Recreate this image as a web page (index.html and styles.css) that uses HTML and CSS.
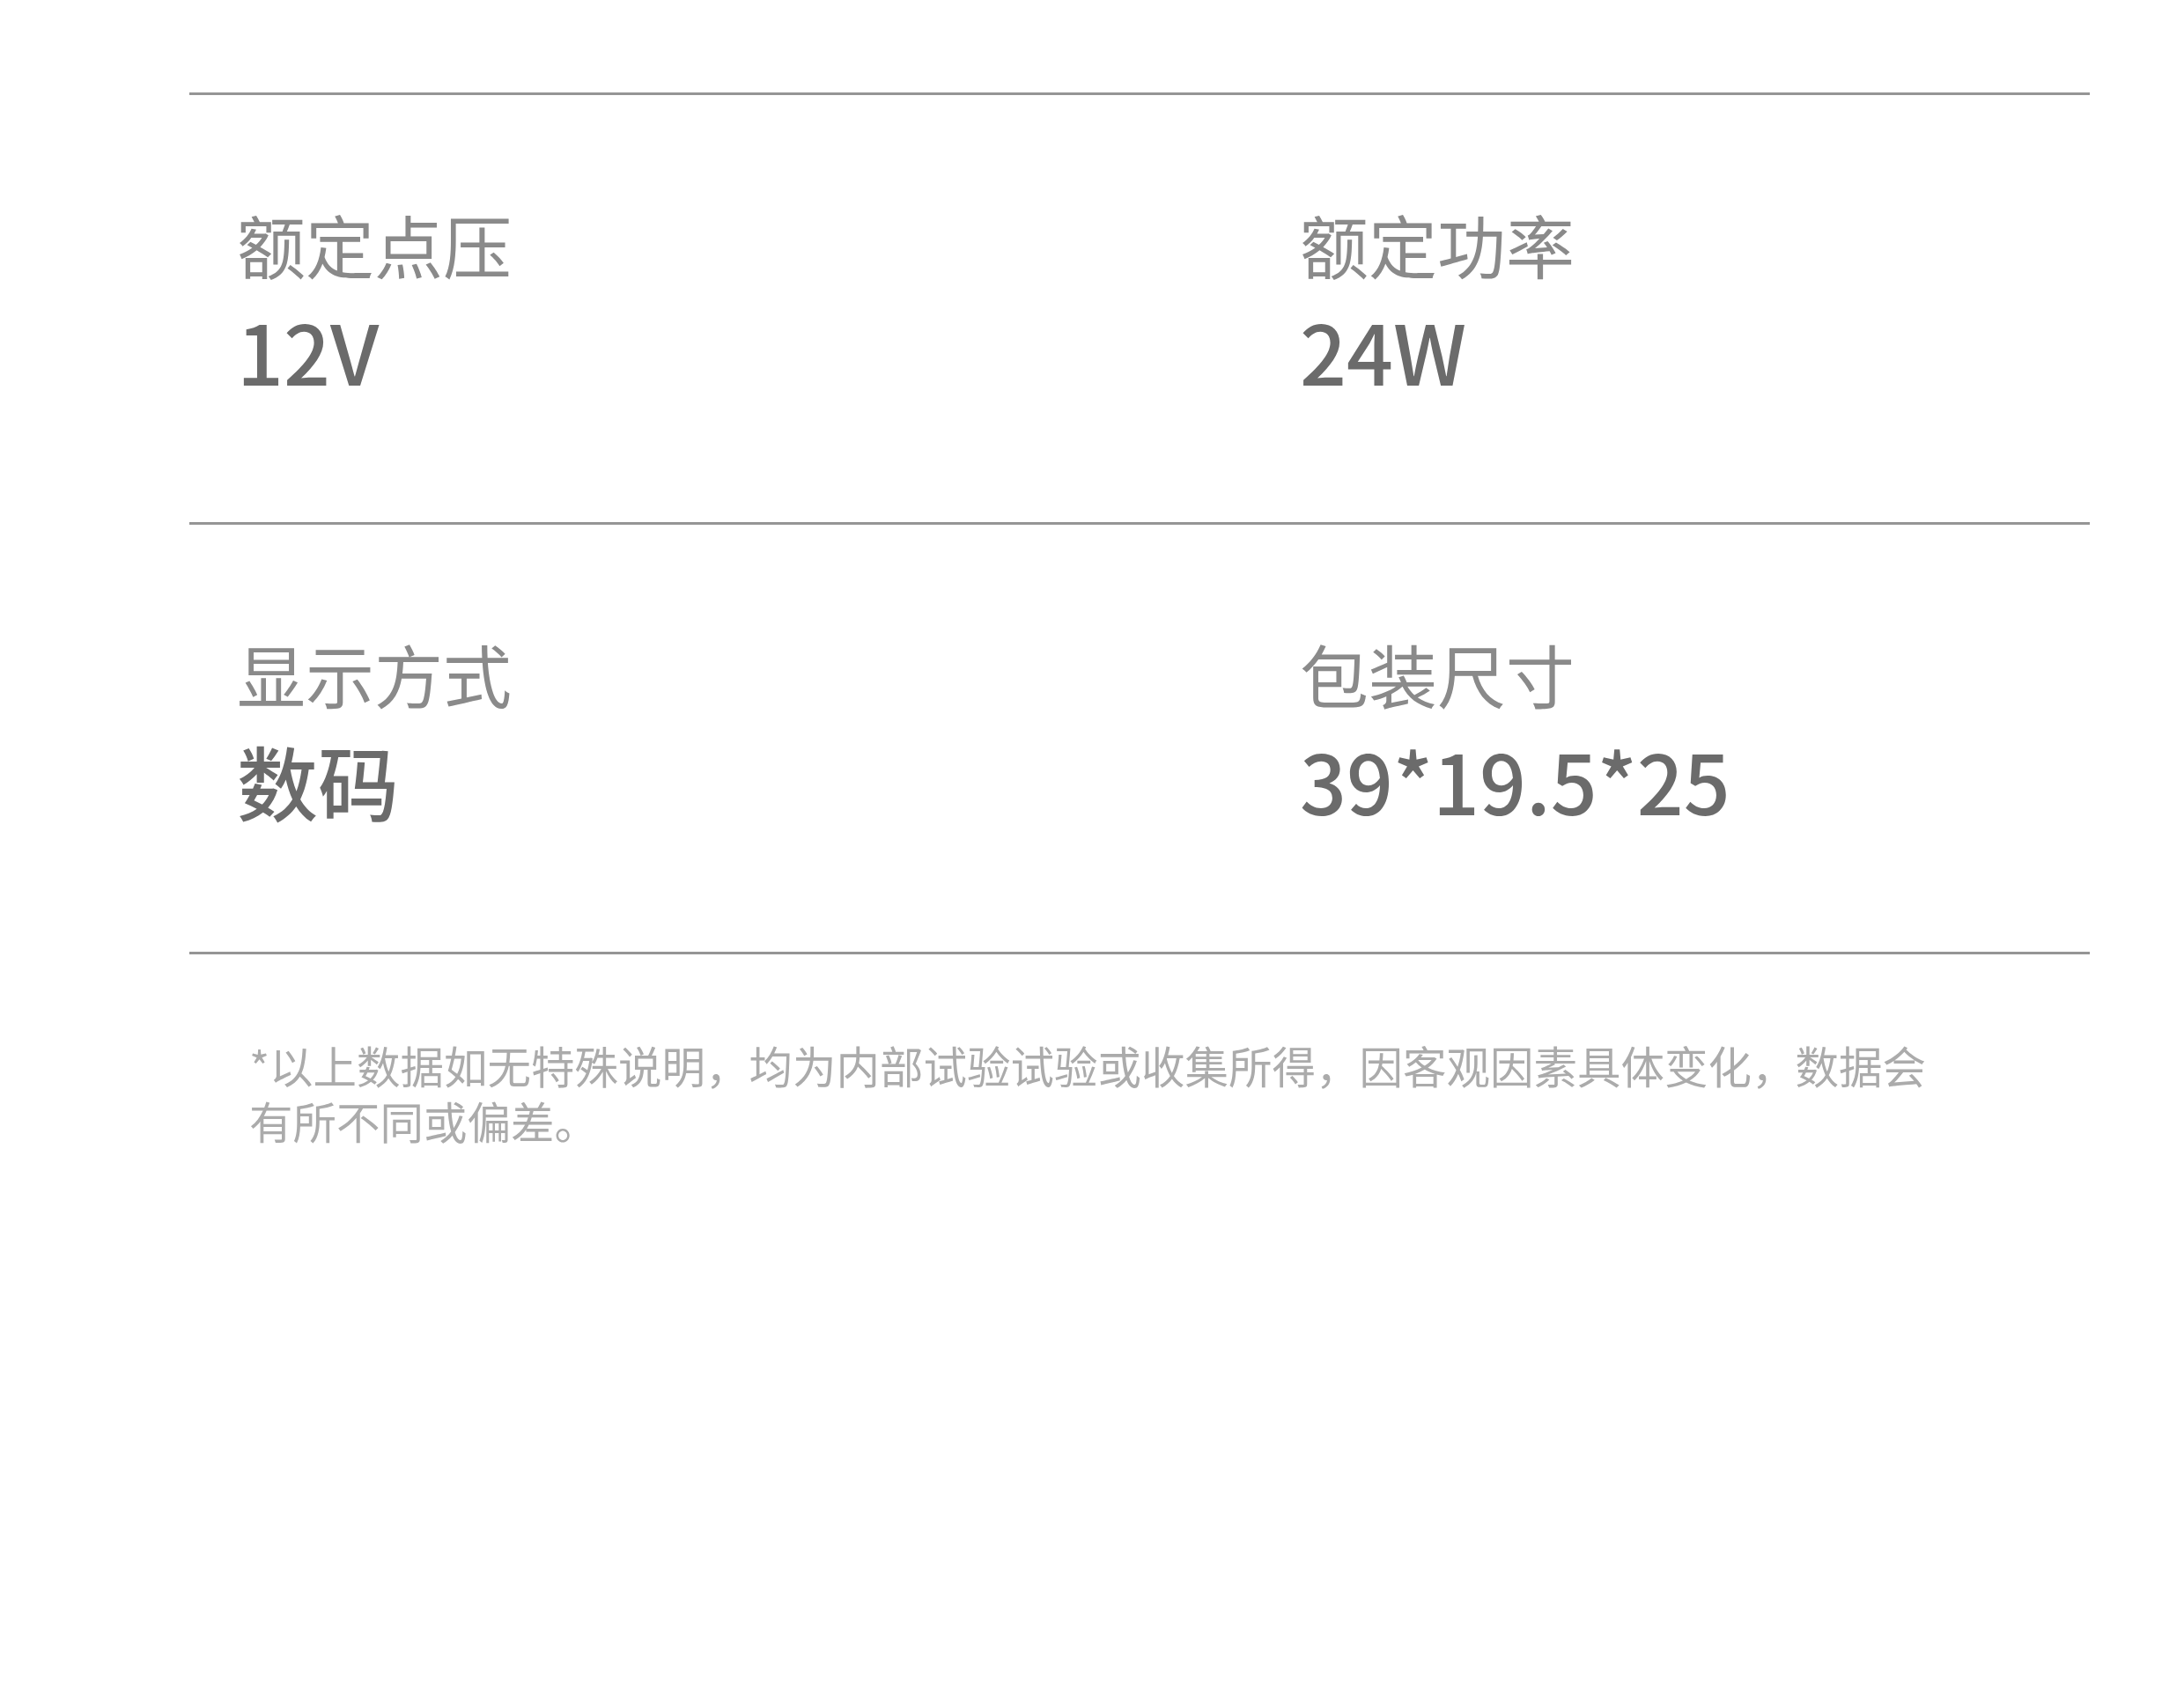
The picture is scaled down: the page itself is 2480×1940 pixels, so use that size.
FILE: index.html
```html
<!DOCTYPE html>
<html lang="zh-CN">
<head>
<meta charset="utf-8">
<title>规格参数</title>
<link rel="stylesheet" href="styles.css">
</head>
<body>
<main class="page">
  <section class="spec-table">
    <div class="spec-row">
      <div class="spec-cell">
        <div class="spec-label">额定点压</div>
        <div class="spec-value">12V</div>
      </div>
      <div class="spec-cell">
        <div class="spec-label">额定功率</div>
        <div class="spec-value">24W</div>
      </div>
    </div>
    <div class="spec-row">
      <div class="spec-cell">
        <div class="spec-label">显示方式</div>
        <div class="spec-value spec-value-cjk">数码</div>
      </div>
      <div class="spec-cell">
        <div class="spec-label">包装尺寸</div>
        <div class="spec-value">39*19.5*25</div>
      </div>
    </div>
  </section>
  <p class="footnote">*以上数据如无特殊说明，均为内部试验试验或收集所得，因客观因素具体变化，数据会有所不同或偏差。</p>
</main>
</body>
</html>
```

FILE: styles.css
```css
html, body {
  margin: 0;
  padding: 0;
  background: #ffffff;
}

body {
  font-family: "Noto Sans CJK SC", "Noto Sans", sans-serif;
}

.page {
  padding: 105px 0 0 215px;
  width: 2158px;
}

.spec-table {
  border-top: 3px solid #959595;
}

.spec-row {
  display: grid;
  grid-template-columns: 1207px 1fr;
  padding: 130px 0 147px 54px;
  border-bottom: 3px solid #959595;
}

.spec-cell {
  display: flex;
  flex-direction: column;
  gap: 34px;
}

.spec-label {
  font-size: 78px;
  line-height: 78px;
  color: #8a8a8a;
  font-weight: 400;
}

.spec-value {
  font-size: 93px;
  line-height: 96px;
  color: #6b6b6b;
  font-weight: 500;
}

.spec-value-cjk {
  font-size: 92px;
}

.footnote {
  margin: 94px 0 0 68px;
  width: 1920px;
  font-size: 49.5px;
  line-height: 63px;
  color: #ababab;
}
```
